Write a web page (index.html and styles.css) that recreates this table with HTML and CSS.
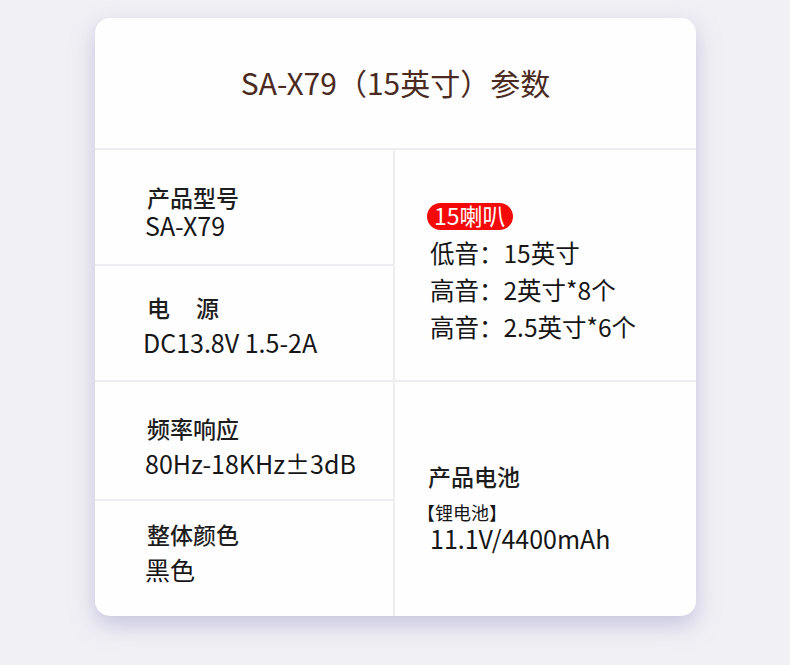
FILE: index.html
```html
<!DOCTYPE html>
<html lang="zh">
<head>
<meta charset="utf-8">
<link rel="stylesheet" href="styles.css">
</head>
<body>
<div class="page">
  <div class="card">
    <div class="title">SA-X79（15英寸）参数</div>
    <div class="grid">
      <div class="col left">
        <div class="cell row1">
          <div class="label tight">产品型号</div>
          <div class="value">SA-X79</div>
        </div>
        <div class="cell row2">
          <div class="label">电&nbsp;&nbsp;&nbsp;&nbsp;&nbsp;源</div>
          <div class="value dc">DC13.8V 1.5-2A</div>
        </div>
        <div class="cell row3">
          <div class="label">频率响应</div>
          <div class="value">80Hz-18KHz±3dB</div>
        </div>
        <div class="cell row4">
          <div class="label">整体颜色</div>
          <div class="value">黑色</div>
        </div>
      </div>
      <div class="col right">
        <div class="rcell speakers">
          <span class="badge">15喇叭</span>
          <div class="line">低音：15英寸</div>
          <div class="line">高音：2英寸*8个</div>
          <div class="line">高音：2.5英寸*6个</div>
        </div>
        <div class="rcell battery">
          <div class="blabel">产品电池</div>
          <div class="small">【锂电池】</div>
          <div class="bvalue">11.1V/4400mAh</div>
        </div>
      </div>
    </div>
  </div>
</div>
</body>
</html>
```

FILE: styles.css
```css
* { box-sizing: border-box; }
html, body { margin: 0; padding: 0; }
body {
  width: 790px;
  height: 665px;
  background: #f1f0f5;
  font-family: "Noto Sans CJK SC", "Noto Sans", sans-serif;
  color: #161616;
  overflow: hidden;
}
.page {
  padding: 18px 0 0 95px;
}
.card {
  width: 601px;
  height: 598px;
  background: #fefeff;
  border-radius: 15px;
  box-shadow: 0 9px 22px rgba(170, 166, 208, 0.6);
  display: flex;
  flex-direction: column;
  overflow: hidden;
}
.title {
  height: 132px;
  display: flex;
  align-items: center;
  justify-content: center;
  font-size: 30px;
  color: #4a2a21;
  padding-bottom: 3px;
  border-bottom: 2px solid #eeedf1;
}
.grid {
  flex: 1;
  display: grid;
  grid-template-columns: 300px 1fr;
}
.col { display: flex; flex-direction: column; }
.left { border-right: 2px solid #eeedf1; }
.cell {
  display: flex;
  flex-direction: column;
  padding-left: 52px;
  border-bottom: 2px solid #eeedf1;
}
.row1 { height: 116px; padding-top: 33px; }
.row2 { height: 116px; padding-top: 27px; }
.row3 { height: 119px; padding-top: 32px; }
.row4 { flex: 1; padding-top: 19px; border-bottom: none; }
.label {
  font-size: 23px;
  font-weight: 500;
  line-height: 28px;
  color: #1e1e1e;
  margin-bottom: 7px;
}
.label.tight { margin-bottom: 0; }
.value {
  font-size: 25px;
  line-height: 28px;
  color: #161616;
  margin-left: -2px;
}
.value.dc { margin-left: -4px; }
.rcell {
  display: flex;
  flex-direction: column;
  align-items: flex-start;
  padding-left: 35px;
}
.speakers {
  height: 232px;
  border-bottom: 2px solid #eeedf1;
  padding-top: 53px;
}
.badge {
  display: inline-block;
  background: #f50a0a;
  color: #fff;
  font-size: 23px;
  line-height: 24px;
  height: 27px;
  padding: 0 7px 3px;
  border-radius: 14px;
  margin-left: -3px;
  margin-bottom: 4px;
}
.line {
  font-size: 24.5px;
  line-height: 37px;
  color: #161616;
}
.battery {
  flex: 1;
  padding-top: 80px;
}
.blabel {
  font-size: 23px;
  font-weight: 500;
  line-height: 28px;
  color: #1e1e1e;
  margin-left: -2px;
  margin-bottom: 10px;
}
.small {
  font-size: 18px;
  line-height: 24px;
  margin-left: -13px;
}
.bvalue {
  font-size: 25px;
  line-height: 28px;
  color: #161616;
}
```
